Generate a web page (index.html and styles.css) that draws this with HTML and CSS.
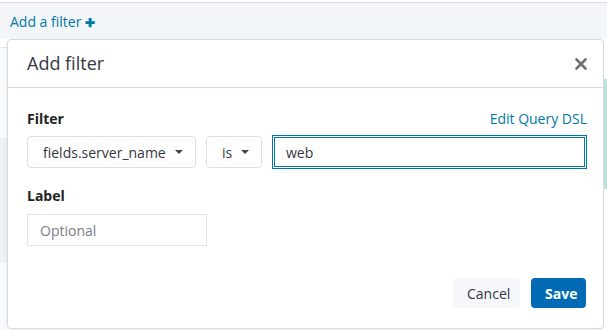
FILE: index.html
```html
<!DOCTYPE html>
<html lang="en">
<head>
    <meta charset="UTF-8">
    <title>Add filter</title>
    <link rel="stylesheet" href="styles.css">
</head>
<body>
    <div class="filter-bar">
        <a class="add-link" href="#">Add a filter <span class="plus">&#10010;</span></a>
    </div>
    <div class="page">
        <div class="side-strip"></div>
        <div class="popover">
            <div class="popover-header">
                <h2>Add filter</h2>
                <svg class="close" width="12" height="12" viewBox="0 0 12 12">
                    <path d="M1.5 1.5 L10.5 10.5 M10.5 1.5 L1.5 10.5" stroke="#6b6f76" stroke-width="2.6" stroke-linecap="round"/>
                </svg>
            </div>
            <div class="popover-body">
                <div class="label-row">
                    <span class="label">Filter</span>
                    <a class="dsl-link" href="#">Edit Query DSL</a>
                </div>
                <div class="controls">
                    <div class="select field-select">fields.server_name <span class="caret"></span></div>
                    <div class="select op-select">is <span class="caret"></span></div>
                    <div class="value-input">web</div>
                </div>
                <div class="label label-gap">Label</div>
                <div class="text-input">Optional</div>
            </div>
            <div class="popover-footer">
                <button class="btn btn-cancel">Cancel</button>
                <button class="btn btn-save">Save</button>
            </div>
        </div>
        <div class="right-strip"></div>
    </div>
</body>
</html>
```

FILE: styles.css
```css
body {
    margin: 0;
    height: 330px;
    overflow: hidden;
    font-family: 'Open Sans', 'Noto Sans', sans-serif;
    font-size: 14px;
    color: #343741;
    background: #fff;
}
.filter-bar {
    height: 36px;
    margin-top: 2px;
    border-top: 1px solid #d9dde3;
    background: #f3f6f9;
    display: flex;
    align-items: center;
    padding-left: 10px;
}
.add-link {
    color: #0079a5;
    text-decoration: none;
    font-size: 14px;
}
.plus {
    font-size: 12px;
    font-weight: bold;
}
.page {
    display: flex;
    height: 291px;
}
.side-strip {
    width: 7px;
    background: linear-gradient(#fafbfc 0, #fafbfc 90px, #eef1f5 90px, #eef1f5 215px, #fafbfc 215px);
    border-top: 1px solid #e3e6ea;
    margin-top: 8px;
}
.right-strip {
    flex: 1;
    background: linear-gradient(#fff 0, #fff 40px, #b9e3da 40px, #b9e3da 150px, #fff 150px);
}
.popover {
    width: 597px;
    height: 290px;
    background: #fff;
    border: 1px solid #d3dae6;
    border-radius: 4px;
    box-shadow: 0 2px 4px rgba(0, 0, 0, 0.08);
    display: flex;
    flex-direction: column;
    box-sizing: border-box;
}
.popover-header {
    height: 48px;
    border-bottom: 1px solid #d3dae6;
    display: flex;
    align-items: center;
    justify-content: space-between;
    padding: 0 16px 0 19px;
    box-sizing: border-box;
}
.popover-header h2 {
    margin: 0 0 2px;
    font-size: 18px;
    font-weight: normal;
    color: #343741;
}
.popover-body {
    padding: 21px 16px 0 19px;
}
.label-row {
    display: flex;
    justify-content: space-between;
    align-items: baseline;
}
.label {
    font-weight: bold;
    font-size: 14px;
    color: #222;
}
.dsl-link {
    color: #0079a5;
    text-decoration: none;
    font-size: 14px;
}
.controls {
    display: flex;
    gap: 10px;
    margin-top: 7px;
    align-items: center;
}
.select {
    height: 32px;
    border: 1px solid #dcdfe4;
    border-radius: 4px;
    box-sizing: border-box;
    display: flex;
    align-items: center;
    justify-content: space-between;
    padding: 0 12px 0 15px;
    color: #343741;
}
.field-select {
    width: 169px;
}
.op-select {
    width: 56px;
    padding-left: 15px;
}
.caret {
    width: 0;
    height: 0;
    border-left: 4px solid transparent;
    border-right: 4px solid transparent;
    border-top: 4px solid #444;
}
.value-input {
    flex: 1;
    height: 34px;
    border: 3px double #0079a5;
    box-sizing: border-box;
    display: flex;
    align-items: center;
    padding-left: 11px;
    color: #343741;
}
.label-gap {
    margin-top: 17px;
}
.text-input {
    width: 180px;
    height: 32px;
    margin-top: 9px;
    border: 1px solid #e2e4e8;
    box-sizing: border-box;
    display: flex;
    align-items: center;
    padding-left: 12px;
    color: #7a7e85;
}
.popover-footer {
    margin-top: auto;
    display: flex;
    justify-content: flex-end;
    gap: 11px;
    padding: 0 17px 20px 0;
}
.btn {
    height: 30px;
    border: none;
    border-radius: 4px;
    font-family: inherit;
    font-size: 14px;
    padding: 0 14px;
}
.btn-cancel {
    background: #f5f7fa;
    color: #343741;
    width: 67px;
}
.btn-save {
    background: #006bb4;
    color: #fff;
    font-weight: bold;
    width: 55px;
}
```
